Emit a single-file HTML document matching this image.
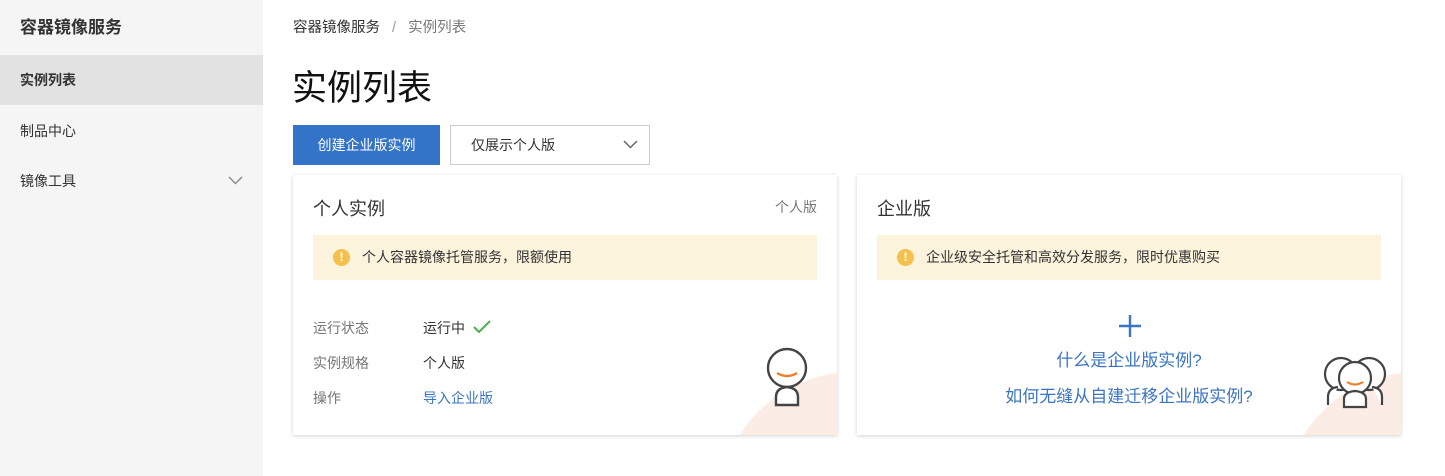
<!DOCTYPE html>
<html><head><meta charset="utf-8"><style>
*{margin:0;padding:0;box-sizing:border-box}
html,body{overflow:hidden}
body{width:1445px;height:476px;background:#fff;font-family:"Liberation Sans","Noto Sans CJK SC",sans-serif;position:relative;color:#333}
.side{position:absolute;left:0;top:0;width:263px;height:476px;background:#f5f5f5}
.side .t{position:absolute;left:20px;top:13px;font-size:17px;font-weight:bold;color:#333}
.side .i{position:absolute;left:0;width:263px;height:50px;line-height:50px;padding-left:20px;font-size:14px;color:#333}
.a{background:#e2e2e2;font-weight:bold}
.abs{position:absolute}
.card{position:absolute;top:175px;width:544px;height:260px;background:#fff;box-shadow:0 1px 4px rgba(0,0,0,.18);overflow:hidden}
.card h3{position:absolute;left:20px;top:20px;font-size:18px;font-weight:normal;color:#333}
.alert{position:absolute;left:20px;top:60px;width:504px;height:45px;background:#fcf3dc;font-size:14px;line-height:45px;padding-left:49px;color:#333}
.alert .ic{position:absolute;left:20px;top:14px;width:17px;height:17px;border-radius:50%;background:#f4c04e;color:#fff;font-size:12px;line-height:17px;text-align:center;font-weight:bold}
.blob{position:absolute;left:427px;top:197px;width:266px;height:266px;border-radius:50%;background:#fbece6}
.row{position:absolute;left:20px;font-size:14px}
.row span.l{color:#777;display:inline-block;width:110px}
a{color:#3b74c4;text-decoration:none}
</style></head><body>
<div class="side">
<div class="t">容器镜像服务</div>
<div class="i a" style="top:55px">实例列表</div>
<div class="i" style="top:106px">制品中心</div>
<div class="i" style="top:156px">镜像工具<svg style="position:absolute;left:228px;top:20px" width="15" height="9"><path d="M1 1l6.5 6.5L14 1" fill="none" stroke="#888" stroke-width="1.4"/></svg></div>
</div>
<div class="abs" style="left:293px;top:16px;font-size:14.5px;color:#333">容器镜像服务 <span style="color:#999;margin:0 8px">/</span> <span style="color:#777">实例列表</span></div>
<div class="abs" style="left:292px;top:60px;font-size:35px;color:#111">实例列表</div>
<div class="abs" style="left:293px;top:125px;width:147px;height:40px;background:#3373c8;color:#fff;font-size:14px;line-height:40px;text-align:center">创建企业版实例</div>
<div class="abs" style="left:450px;top:125px;width:200px;height:40px;border:1px solid #ccc;font-size:14px;line-height:38px;padding-left:20px">仅展示个人版<svg style="position:absolute;left:172px;top:14px" width="15" height="9"><path d="M1 1l6.5 6.5L14 1" fill="none" stroke="#666" stroke-width="1.5"/></svg></div>
<div class="card" style="left:293px">
<div class="blob"></div>
<h3>个人实例</h3>
<div class="abs" style="right:20px;top:22px;font-size:14px;color:#777">个人版</div>
<div class="alert"><div class="ic">!</div>个人容器镜像托管服务，限额使用</div>
<div class="row" style="top:143px"><span class="l">运行状态</span>运行中 <svg width="18" height="14" style="vertical-align:-1px;margin-left:4px"><path d="M1 7l5 5L17 1" fill="none" stroke="#4caf50" stroke-width="2"/></svg></div>
<div class="row" style="top:178px"><span class="l">实例规格</span>个人版</div>
<div class="row" style="top:213px"><span class="l">操作</span><a>导入企业版</a></div>
<svg class="abs" style="left:470px;top:172px" width="50" height="62"><circle cx="24" cy="21" r="19" fill="#fff" stroke="#444" stroke-width="2.4"/><path d="M14 26q10 6 20 0" fill="none" stroke="#f07e2a" stroke-width="2.4"/><path d="M13 58v-8q0-9 11-10q11 1 11 10v8z" fill="#fff" stroke="#444" stroke-width="2.4"/></svg>
</div>
<div class="card" style="left:857px">
<div class="blob"></div>
<h3>企业版</h3>
<div class="alert"><div class="ic">!</div>企业级安全托管和高效分发服务，限时优惠购买</div>
<svg class="abs" style="left:261px;top:139px" width="24" height="24"><path d="M12 1v22M1 12h22" stroke="#3b74c4" stroke-width="2.4"/></svg>
<div class="abs" style="left:0;width:544px;text-align:center;top:171px;font-size:17px"><a>什么是企业版实例?</a></div>
<div class="abs" style="left:0;width:544px;text-align:center;top:207px;font-size:17px"><a>如何无缝从自建迁移企业版实例?</a></div>
<svg class="abs" style="left:465px;top:178px" width="66" height="56"><circle cx="19" cy="21" r="16" fill="#fff" stroke="#444" stroke-width="2.2"/><path d="M6 52v-8q0-9 10-10" fill="#fff" stroke="#444" stroke-width="2.2"/><circle cx="47" cy="21" r="16" fill="#fff" stroke="#444" stroke-width="2.2"/><path d="M60 52v-8q0-9-10-10" fill="#fff" stroke="#444" stroke-width="2.2"/><circle cx="33" cy="25" r="16" fill="#fff" stroke="#444" stroke-width="2.2"/><path d="M25 29q8 5 16 0" fill="none" stroke="#f07e2a" stroke-width="2.2"/><path d="M22 54v-8q0-7 11-8q11 1 11 8v8z" fill="#fff" stroke="#444" stroke-width="2.2"/></svg>
</div>
</body></html>
